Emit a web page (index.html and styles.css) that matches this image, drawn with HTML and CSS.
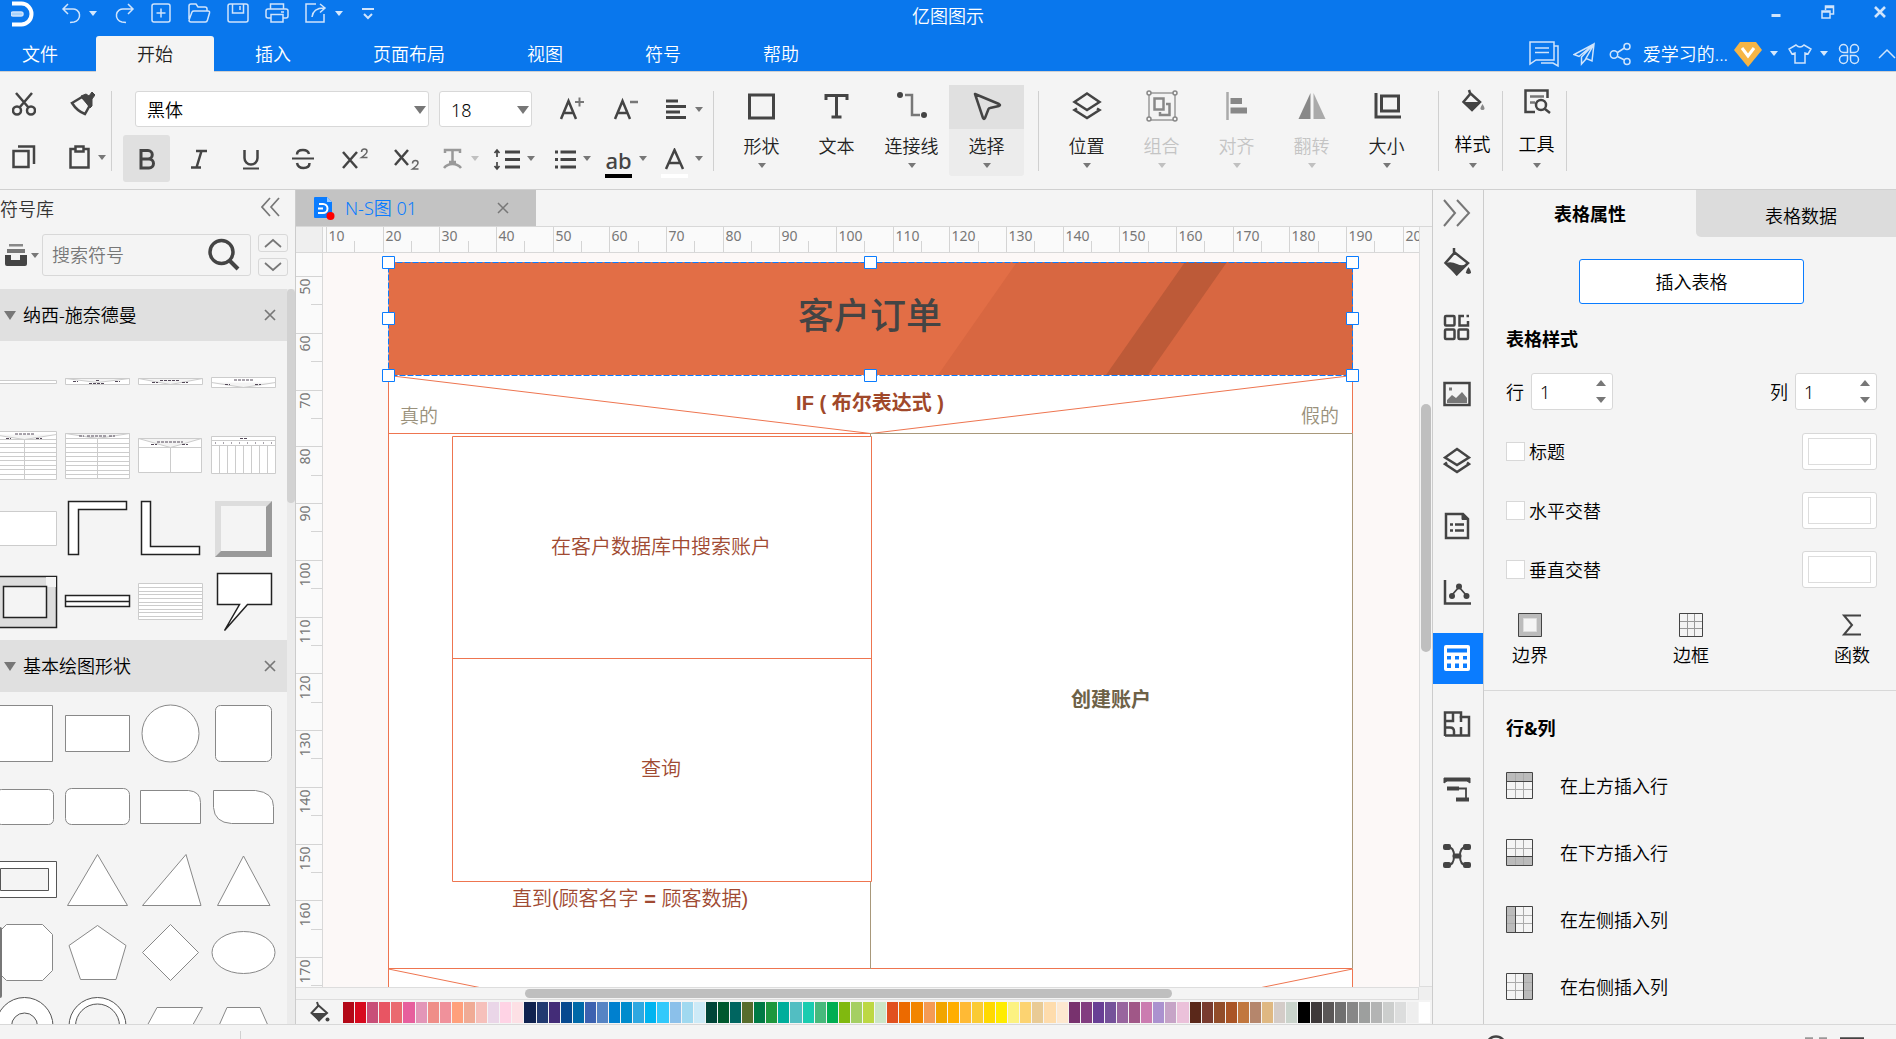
FILE: index.html
```html
<!DOCTYPE html>
<html lang="zh-CN">
<head>
<meta charset="utf-8">
<title>亿图图示</title>
<link rel="stylesheet" href="styles.css">
</head>
<body>
<div class="app">

<header class="top">
  <div class="titlebar">
    <div class="quick">
      <svg class="logo" width="24" height="26" viewBox="0 0 24 26"><path d="M1 2.500H10.500A10 10.500 0 0 1 10.500 23.500H1" fill="none" stroke="#fff" stroke-width="4"/><rect x="0" y="11" width="12" height="4" rx="2" fill="#a6d2fc"/></svg>
      <button class="q undo" aria-label="撤销"><svg width="20" height="22" viewBox="0 0 20 22"><path d="M7 2 2 7l5 5M2 7h9a6 6 0 0 1 2 13l-4 .5"/></svg><i class="caret light"></i></button>
      <button class="q" aria-label="重做"><svg width="20" height="22" viewBox="0 0 20 22"><path d="m13 2 5 5-5 5M18 7H9a6 6 0 0 0-2 13l4 .5"/></svg></button>
      <button class="q" aria-label="新建"><svg width="20" height="22" viewBox="0 0 20 22"><rect x="1" y="2" width="18" height="18" rx="2"/><path d="M10 6.500v9M5.500 11h9"/></svg></button>
      <button class="q" aria-label="打开"><svg width="24" height="22" viewBox="0 0 24 22"><path d="M2 17V4q0-2 2-2h5l2 3h7q2 0 2 2v2M2 18l3-8q.5-1 2-1h14q2 0 1.500 2l-2 7q-.5 2-2 2H4q-2 0-2-2"/></svg></button>
      <button class="q" aria-label="保存"><svg width="22" height="22" viewBox="0 0 22 22"><rect x="1" y="2" width="20" height="18" rx="2"/><path d="M5.500 2v9h11V2M13 4v4"/></svg></button>
      <button class="q" aria-label="打印"><svg width="24" height="22" viewBox="0 0 24 22"><path d="M5.500 7V2h13v5M6 16H3q-2 0-2-2V9q0-2 2-2h18q2 0 2 2v5q0 2-2 2h-3M6 12.500h12V20H6zM16 10h3"/></svg></button>
      <button class="q" aria-label="导出"><svg width="22" height="22" viewBox="0 0 22 22"><path d="M11 2H1v18h18v-8M7 15q1-9 12-9M15 2l5 4-5 4.500"/></svg><i class="caret light"></i></button>
      <button class="q" aria-label="自定义"><svg width="14" height="22" viewBox="0 0 14 22"><path d="M1 7h12M3 12l4 4 4-4" stroke-width="2"/></svg></button>
    </div>
    <h1>亿图图示</h1>
    <div class="winctl">
      <button aria-label="最小化"><svg width="14" height="14" viewBox="0 0 14 14"><path d="M2.500 10.500h9" stroke-width="3"/></svg></button>
      <button aria-label="还原"><svg width="14" height="14" viewBox="0 0 14 14"><path d="M1 6h8v7H1zM1 7h8M4.500 5V1h8v8h-3M5 2.500h8" stroke-width="1.500"/></svg></button>
      <button aria-label="关闭"><svg width="14" height="14" viewBox="0 0 14 14"><path d="m2 2 10 10M12 2 2 12" stroke-width="2.600"/></svg></button>
    </div>
  </div>
  <nav class="menu">
    <button class="first">文件</button>
    <button class="on">开始</button>
    <button>插入</button>
    <button>页面布局</button>
    <button>视图</button>
    <button>符号</button>
    <button>帮助</button>
    <div class="account">
      <svg width="30" height="28" viewBox="0 0 30 28" stroke-width="2"><path d="M1 24V2h24v18H7zM25 6h4v20l-5-3H12M6 8h14M6 12.500h14"/></svg>
      <svg width="22" height="24" viewBox="0 0 22 24"><path d="M21 2 1 12.500l5 2L21 2l-2 17-6-2.500L21 2 8.500 15v7l4.500-5"/></svg>
      <svg width="22" height="24" viewBox="0 0 22 24"><circle cx="5" cy="12.500" r="3.700"/><circle cx="18" cy="4.500" r="3"/><circle cx="18" cy="19.500" r="3"/><path d="m8.500 10.500 7-4.500M8.500 14.500l7 3.500"/></svg>
      <span>爱学习的...</span>
      <svg width="28" height="26" viewBox="0 0 28 26" class="vip"><path d="M6 1h16l6 8-14 17L0 9z" fill="#f6b545" stroke="none"/><path d="m8 7 6 8 6-8" stroke="#fff" stroke-width="3"/></svg>
      <i class="caret light"></i>
      <svg width="24" height="24" viewBox="0 0 24 24" class="shirt"><path d="M8 3 1 7l3 5 3-1v10h10V11l3 1 3-5-7-4q-4 4-8 0z"/></svg>
      <i class="caret light"></i>
      <svg width="22" height="24" viewBox="0 0 22 24" class="clover"><path d="M9.500 10.500H5.500a4 4 0 1 1 4-4zM12.500 10.500h4a4 4 0 1 0-4-4zM9.500 13.500H5.500a4 4 0 1 0 4 4zM12.500 13.500h4a4 4 0 1 1-4 4z"/></svg>
      <svg width="18" height="24" viewBox="0 0 18 24" class="fold"><path d="m1 16 8-8 8 8"/></svg>
    </div>
  </nav>
</header>

<section class="ribbon">
  <div class="clip">
    <button aria-label="剪切"><svg width="24" height="24" viewBox="0 0 24 24"><circle cx="5" cy="18.500" r="4"/><circle cx="19" cy="18.500" r="4"/><path d="M4 1l12.500 14.500M20 1 7.500 15.500"/></svg></button>
    <button aria-label="格式刷"><svg width="26" height="24" viewBox="0 0 26 24"><path d="m3 11 10-6 8 8-5 9q-8-3-13-11z"/><path d="m12 4 5-2 3 2 3-4 3 3-3 4 0 7-2 2z" fill="#444" stroke-width="1"/></svg></button>
    <button aria-label="复制"><svg width="24" height="24" viewBox="0 0 24 24"><path d="M1.500 6h15v16h-15zM6 1.500h16V19"/></svg></button>
    <button class="paste" aria-label="粘贴"><svg width="24" height="24" viewBox="0 0 24 24"><path d="M7 4H2.500v18.500h18V4H16M7.500 1.500h8v5h-8z"/></svg><i class="caret"></i></button>
  </div>
  <i class="rule"></i>
  <div class="font">
    <div class="frow one">
      <label class="pick wide"><select aria-label="字体"><option>黑体</option></select><i class="caret big"></i></label>
      <label class="pick num"><select aria-label="字号"><option>18</option></select><i class="caret big"></i></label>
      <button class="grow" aria-label="增大字号"><svg width="28" height="28" viewBox="0 0 28 28"><path d="m3 24 7.500-18L18 24M5.500 18h10"/><path d="M17 7h9M21.500 2.500v9" stroke="#777" stroke-width="2"/></svg></button>
      <button class="grow" aria-label="减小字号"><svg width="28" height="28" viewBox="0 0 28 28"><path d="m3 24 7.500-18L18 24M5.500 18h10"/><path d="M18 7h8" stroke="#777"/></svg></button>
      <button class="split" aria-label="对齐方式"><svg width="28" height="28" viewBox="0 0 28 28"><path d="M5 6h12M5 11.500h20M5 17h14M5 22.500h20" stroke-width="2.800"/></svg><i class="caret"></i></button>
    </div>
    <div class="frow two">
      <button class="fb on" aria-label="加粗"><svg width="28" height="28" viewBox="0 0 28 28"><path d="M8 5.500h7a4 4 0 0 1 0 8.500H8h8a4.500 4.500 0 0 1 0 9H8z" stroke-width="3"/></svg></button>
      <button class="fb" aria-label="倾斜"><svg width="28" height="28" viewBox="0 0 28 28"><path d="M11 6h11M6 22.500h10M16.500 6l-5 16.500"/></svg></button>
      <button class="fb" aria-label="下划线"><svg width="28" height="28" viewBox="0 0 28 28"><path d="M7.500 5v8a6 6 0 0 0 13 0V5"/><path d="M6 23.500h16" stroke-width="2"/></svg></button>
      <button class="fb" aria-label="删除线"><svg width="28" height="28" viewBox="0 0 28 28"><path d="M20 9q-1-4-6-4-6 0-6 4.500M8 18q1 5 6.500 5 6 0 6-5"/><path d="M3 13.500h22" stroke-width="2"/></svg></button>
      <button class="fb" aria-label="上标"><svg width="28" height="28" viewBox="0 0 28 28"><path d="m2 7 14 16M16 7 2 23"/><path d="M20.500 7q0-3 3-3 2.500 0 2.500 2.500 0 2-5.500 6h6" stroke="#666" stroke-width="1.500"/></svg></button>
      <button class="fb" aria-label="下标"><svg width="28" height="28" viewBox="0 0 28 28"><path d="m2 5 13 15M15 5 2 20"/><path d="M19.500 18.500q0-3 3-3 2.500 0 2.500 2.500 0 2-5.500 6h6" stroke="#666" stroke-width="1.500"/></svg></button>
      <button class="split off lead" aria-label="文本效果"><svg width="28" height="28" viewBox="0 0 28 28"><path d="M8 8V5h15v3M15.500 5v12M12 17h7M7 23q3-4 8.500-4t8.500 4" stroke="#999"/></svg><i class="caret pale"></i></button>
      <button class="split" aria-label="行距"><svg width="28" height="28" viewBox="0 0 28 28"><path d="M12 7h15M12 14.500h15M12 22h15" stroke-width="3"/><path d="M4 5v7M1.500 8 4 5l2.500 3M4 17v7M1.500 21 4 24l2.500-3" stroke-width="1.700"/></svg><i class="caret"></i></button>
      <button class="split" aria-label="项目符号"><svg width="28" height="28" viewBox="0 0 28 28"><path d="M11.500 7H27M11.500 14.500H27M11.500 22H27M6 7h3M6 14.500h3M6 22h3" stroke-width="2.800"/></svg><i class="caret"></i></button>
      <button class="split" aria-label="文本突出"><span class="glyph ink">ab</span><i class="caret"></i></button>
      <button class="split" aria-label="字体颜色"><span class="glyph blank"><svg width="28" height="26" viewBox="0 0 28 26"><path d="m5 21 8.500-19L22 21M7.500 15h12"/></svg></span><i class="caret"></i></button>
    </div>
  </div>
  <i class="rule"></i>
  <div class="tools draw">
    <button class="tool"><span><svg width="30" height="30" viewBox="0 0 30 30"><rect x="2.500" y="4" width="24" height="23" stroke-width="3"/></svg></span><b>形状</b><i class="caret"></i></button>
    <button class="tool"><span><svg width="30" height="30" viewBox="0 0 30 30"><path d="M4 9V4.500h21V9M14.500 4.500V26M9.500 26h10" stroke-width="3"/></svg></span><b>文本</b></button>
    <button class="tool"><span><svg width="30" height="30" viewBox="0 0 30 30"><path d="M8 4h7v20h8" stroke="#777" stroke-width="2.500"/><circle cx="3" cy="4" r="3" fill="#444" stroke="none"/><circle cx="27" cy="24" r="3" fill="#444" stroke="none"/></svg></span><b>连接线</b><i class="caret"></i></button>
    <button class="tool on"><span><svg width="30" height="30" viewBox="0 0 30 30"><path d="M3 3 27 13q2 1 0 2l-9 2q-1 0-1.500 1L13 27q-1 2-2 0z" stroke-linejoin="round"/></svg></span><b>选择</b><i class="caret"></i></button>
  </div>
  <i class="rule far"></i>
  <div class="tools place">
    <button class="tool"><span><svg width="30" height="30" viewBox="0 0 30 30"><path d="M15 2.500 27.500 11 15 19 2.500 11zM5 17.500l-2.500 1.500L15 27l12.500-8-2.500-1.500"/></svg></span><b>位置</b><i class="caret"></i></button>
    <button class="tool off"><span><svg width="32" height="32" viewBox="0 0 32 32"><path d="M3 3h26v27H3z" stroke="#999" stroke-width="1.500"/><g fill="#f4f4f4" stroke="#888" stroke-width="1.500"><circle cx="3" cy="3" r="2"/><circle cx="29" cy="3" r="2"/><circle cx="3" cy="29" r="2"/><circle cx="29" cy="29" r="2"/></g><path d="M8.500 8.500h9v11h-9zM20 14h3.500v11H14v-3" stroke="#888"/></svg></span><b>组合</b><i class="caret pale"></i></button>
    <button class="tool off"><span><svg width="30" height="30" viewBox="0 0 30 30"><path d="M5.500 1v28" stroke="#aaa" stroke-width="2.500"/><path d="M8.500 7H20v6H8.500zM8.500 16.500H25v6H8.500z" fill="#888" stroke="none"/></svg></span><b>对齐</b><i class="caret pale"></i></button>
    <button class="tool off"><span><svg width="30" height="30" viewBox="0 0 30 30"><path d="M13.500 2v26h-12z" fill="#888" stroke="none"/><path d="M16.500 2v26h12z" fill="#aaa" stroke="none"/></svg></span><b>翻转</b><i class="caret pale"></i></button>
    <button class="tool"><span><svg width="30" height="30" viewBox="0 0 30 30"><path d="M4 2v24h25" stroke-width="3"/><path d="M9.500 5h17v15h-17z" stroke-width="3"/></svg></span><b>大小</b><i class="caret"></i></button>
  </div>
  <i class="rule far"></i>
  <div class="tools slim">
    <button class="tool compact"><span><svg width="24" height="26" viewBox="0 0 24 26"><path d="M10 5 2.500 14 11 22l8-8-10-9-1-3" stroke-width="2.500"/><path d="M3 14h16l-8 9z" fill="#444" stroke="none"/><path d="M21.500 16q4 6 0 6t0-6z" fill="#888" stroke="none"/></svg></span><b>样式</b><i class="caret"></i></button>
  </div>
  <i class="rule"></i>
  <div class="tools slim">
    <button class="tool compact"><span><svg width="28" height="26" viewBox="0 0 28 26"><path d="M12 24H2.500V2.500h22V10"/><path d="M7 8.500h14M7 14.500h5" stroke="#777"/><circle cx="18" cy="17" r="5"/><path d="m22 21 5 4"/></svg></span><b>工具</b><i class="caret"></i></button>
  </div>
  <i class="rule"></i>
</section>

<main class="body">
  <aside class="library">
    <div class="libhead"><h2>符号库</h2><button aria-label="收起"><svg width="20" height="20" viewBox="0 0 20 20"><path d="M9 1 1 10l8 9M18 1l-8 9 8 9" stroke="#777" stroke-width="1.700"/></svg></button></div>
    <div class="find">
      <button class="stack" aria-label="符号库列表"><svg width="24" height="24" viewBox="0 0 24 24"><path d="M5 1h14v2.500H5z" fill="#888" stroke="none"/><path d="M3 6h18v4H3z" fill="#777" stroke="none"/><path d="M1 12h6v5h9v-5h7v9q0 2-2 2H3q-2 0-2-2z" fill="#444" stroke="none"/></svg><i class="caret"></i></button>
      <label class="search"><input type="text" placeholder="搜索符号" aria-label="搜索符号"><svg width="34" height="34" viewBox="0 0 34 34"><circle cx="14.500" cy="14" r="11.500" stroke-width="3.500"/><path d="m23 23 8 8" stroke-width="4"/></svg></label>
      <div class="updown">
        <button aria-label="上一个"><svg width="18" height="10" viewBox="0 0 18 10"><path d="m1 9 8-7 8 7" stroke="#777" stroke-width="1.700"/></svg></button>
        <button aria-label="下一个"><svg width="18" height="10" viewBox="0 0 18 10"><path d="m1 1 8 7 8-7" stroke="#777" stroke-width="1.700"/></svg></button>
      </div>
    </div>
    <div class="liblist">
      <div class="libscroll">
        <div class="sect"><i class="caret huge"></i><h3>纳西-施奈德曼</h3><button aria-label="关闭纳西-施奈德曼"><svg width="12" height="12" viewBox="0 0 12 12"><path d="m1 1 10 10M11 1 1 11" stroke="#777" stroke-width="1.700"/></svg></button></div>
        <div class="shapes faint">
          <svg viewBox="0 0 73 73"><path d="M4.500 35.500h64v3h-64z"/></svg>
          <svg viewBox="0 0 73 73"><path d="M4.500 33.500h64v6h-64zl32 4 32-4"/><path d="M12 36.500h5M54 36.500h5M28 38.500h16M35 35.500h3" class="tx"/></svg>
          <svg viewBox="0 0 73 73"><path d="M4.500 33.500h64v6h-64zl32 6 32-6"/><path d="M18 37.500h6M48 37.500h6M26 35.500h19" class="tx"/></svg>
          <svg viewBox="0 0 73 73"><path d="M4.500 32.500h64v10h-64zm0 5 32 5 32-5"/><path d="M18 39.500h5M48 39.500h6M27 35h19" class="tx"/></svg>
          <svg viewBox="0 0 73 73"><path d="M4.500 13.500h64v48h-64zm0 3 32 5 32-5M4.500 21.500h64m-64 4h64m-64 4h64m-64 5h64m-64 4h64m-64 4h64m-64 5h64m-64 4h64m-64 5h64M36.500 21.500v40"/><path d="M18 20.500h5M48 20.500h6M27 16h19" class="tx"/></svg>
          <svg viewBox="0 0 73 73"><path d="M4.500 15.500h64v45h-64zl32 5 32-5M4.500 20.500h64m-64 5h64m-64 4h64m-64 5h64m-64 4h64m-64 5h64m-64 4h64m-64 5h64m-64 4h64M36.500 20.500v40"/><path d="M18 18h5M48 18h6M26 18h20" class="tx"/></svg>
          <svg viewBox="0 0 73 73"><path d="M4.500 20.500h63v34h-63zl32 9 31-9M4.500 29.500h63M36.500 29.500v25"/><path d="M17 26.500h6M48 26.500h6M23 24h26" class="tx"/></svg>
          <svg viewBox="0 0 73 73"><path d="M4.500 18.500h64v37h-64zm0 4h64m-64 5h64M12.500 27.500v28m8-28v28m8-28v28m8-28v28m8-28v28m8-28v28m8-28v28"/><path d="M33 20.500h7M8 25h1m7 0h1m7 0h1m7 0h1m7 0h1m7 0h1m7 0h1m7 0h1" class="tx"/></svg>
          <svg viewBox="0 0 73 73"><path d="M4.500 20.500h64v34h-64z"/></svg>
          <svg viewBox="0 0 73 73" class="bold"><path d="M7.500 63.500v-53h58v8h-48v45z"/></svg>
          <svg viewBox="0 0 73 73" class="bold"><path d="M7.500 10.500h9v45h49v8h-58z"/></svg>
          <svg viewBox="0 0 73 73" class="bevel"><path d="M8 10h57v56H8z" fill="#ddd"/><path d="M65 10v56H8l6-6h45V16z" fill="#999"/><path d="M14 15h45v45H14z" fill="#f4f4f4"/></svg>
          <svg viewBox="0 0 73 73" class="bold"><path d="M4.500 12.500h64v51h-64z" class="g"/><path d="M58 13h10v10H58z" fill="#f4f4f4" stroke="none"/><path d="M15.500 22.500h43v31h-43z" class="h"/></svg>
          <svg viewBox="0 0 73 73" class="bold"><path d="M4.500 31.500h64v11h-64zm0 6h64"/></svg>
          <svg viewBox="0 0 73 73"><path d="M4.500 19.500h64v36h-64zm0 4h64m-64 4h64m-64 3h64m-64 4h64m-64 4h64m-64 3h64m-64 4h64m-64 3h64m-64 4h64"/></svg>
          <svg viewBox="0 0 73 73" class="bold"><path d="M10.500 9.500h54v31h-24l-23 26 15-26h-22z"/></svg>
        </div>
        <div class="sect"><i class="caret huge"></i><h3>基本绘图形状</h3><button aria-label="关闭基本绘图形状"><svg width="12" height="12" viewBox="0 0 12 12"><path d="m1 1 10 10M11 1 1 11" stroke="#777" stroke-width="1.700"/></svg></button></div>
        <div class="shapes">
          <svg viewBox="0 0 73 73"><path d="M8.500 9.500h56v56h-56z"/></svg>
          <svg viewBox="0 0 73 73"><path d="M4.500 19.500h64v36h-64z"/></svg>
          <svg viewBox="0 0 73 73"><circle cx="36.500" cy="37.500" r="28.500"/></svg>
          <svg viewBox="0 0 73 73"><rect x="8.500" y="9.500" width="56" height="56" rx="5"/></svg>
          <svg viewBox="0 0 73 73"><rect x="8.500" y="20.500" width="57" height="35" rx="5"/></svg>
          <svg viewBox="0 0 73 73"><rect x="4.500" y="19.500" width="64" height="36" rx="6"/></svg>
          <svg viewBox="0 0 73 73"><path d="M6.500 21.500h48q12 1 12 12v21h-60z"/></svg>
          <svg viewBox="0 0 73 73"><path d="M6.500 21.500h42q18 2 18 16v17h-42q-17-1-18-16z"/></svg>
          <svg viewBox="0 0 73 73" class="dark"><path d="M4.500 19.500h64v36h-64z"/><path d="M12.500 26.500h48v22h-48z" class="h"/></svg>
          <svg viewBox="0 0 73 73"><path d="m36.500 12.500 30 51h-60z"/></svg>
          <svg viewBox="0 0 73 73"><path d="m52 12.500 15 51H8.500z"/></svg>
          <svg viewBox="0 0 73 73"><path d="m36.500 14 26.500 49.500H10.500z"/></svg>
          <svg viewBox="0 0 73 73"><path d="M18.500 9.500h36l10 10v36l-10 10h-36l-10-10v-36z"/></svg>
          <svg viewBox="0 0 73 73"><path d="M36.500 10.500 65 30.500l-10 34H19.500L8 30.500z"/></svg>
          <svg viewBox="0 0 73 73"><path d="m36.500 9.500 28 28-28 28-28-28z"/></svg>
          <svg viewBox="0 0 73 73"><ellipse cx="36.500" cy="37.500" rx="31.500" ry="21"/></svg>
          <svg viewBox="0 0 73 73" class="dark"><circle cx="36.500" cy="38" r="28.500"/><circle cx="36.500" cy="38" r="13" class="h"/></svg>
          <svg viewBox="0 0 73 73" class="dark"><circle cx="36.500" cy="38" r="28.500"/><circle cx="36.500" cy="38" r="22" class="h"/></svg>
          <svg viewBox="0 0 73 73"><path d="M23 19.500h45.500l-20 36h-45z"/></svg>
          <svg viewBox="0 0 73 73"><path d="M20 19.500h33l16 36H4z"/></svg>
        </div>
        <i class="grip"></i>
      </div>
      <div class="vtrack"><i></i></div>
    </div>
  </aside>

  <section class="doc">
    <div class="doctabs">
      <div class="doctab"><svg width="22" height="24" viewBox="0 0 22 24"><path d="M2 1h12l5 5v15q0 1-1 1H2q-1 0-1-1V2q0-1 1-1z" fill="#0a7cff" stroke="none"/><path d="M14 1l5 5h-5z" fill="#9ccbff" stroke="none"/><path d="M6 8h4a4.200 4.200 0 0 1 0 9H5M5 12.500h5" stroke="#fff" stroke-width="2"/><circle cx="17.500" cy="20" r="4" fill="#f00" stroke="none"/></svg><span>N-S图 01</span><button aria-label="关闭文档"><svg width="12" height="12" viewBox="0 0 12 12"><path d="m1 1 10 10M11 1 1 11" stroke="#777" stroke-width="1.500"/></svg></button></div>
    </div>
    <div class="work">
      <div class="corner"></div>
      <svg class="hruler" id="hruler"></svg>
      <svg class="vruler" id="vruler"></svg>
      <div class="canvas">
        <svg class="chart" width="970" height="740" viewBox="0 0 970 740">
          <path d="M1 8h964v732H1z" fill="#fff" stroke="none"/>
          <path d="M.5 9h964v113H.5z" fill="#e26e46"/>
          <path d="M629 9h336v113H550z" fill="#d86741"/>
          <path d="M797 9h42l-79 113h-42z" fill="#bd5a38"/>
          <g fill="none" stroke="#ee7550">
            <path d="M.5 122v618M.5 180.500h482M.5 715.500h964M964.500 122v58.500M964.500 716v24M.5 122.500l482 58 482-58M.5 716l482 98 482-98"/>
            <path d="M64.500 183.500h419v445h-419zm0 222h419"/>
          </g>
          <path d="M482.500 180.500h482v535M482.500 181v3M482.500 629v87" fill="none" stroke="#a8987a"/>
          <path d="M.5 9.500h964v113H.5z" fill="none" stroke="#0a7cff" stroke-dasharray="6 2"/>
          <g fill="#fff" stroke="#0a7cff">
            <path d="M-5.500 3.500h12v12h-12zm482 0h12v12h-12zm482 0h12v12h-12zM-5.500 59.500h12v12h-12zm964 0h12v12h-12zM-5.500 116.500h12v12h-12zm482 0h12v12h-12zm482 0h12v12h-12z"/>
          </g>
          <g text-anchor="middle" class="txt">
            <text x="482" y="76" class="t-head">客户订单</text>
            <text x="482" y="157" class="t-if">IF ( 布尔表达式 )</text>
            <text x="31" y="170" class="t-side">真的</text>
            <text x="932" y="170" class="t-side">假的</text>
            <text x="273" y="301" class="t-body">在客户数据库中搜索账户</text>
            <text x="273" y="523" class="t-body">查询</text>
            <text x="242" y="653" class="t-body">直到(顾客名字 <tspan class="eq">=</tspan> 顾客数据)</text>
            <text x="723" y="454" class="t-new">创建账户</text>
          </g>
        </svg>
      </div>
      <div class="vbar"><i></i></div>
      <div class="hbar"><i></i></div>
      <div class="notch"></div>
    </div>
    <div class="palette">
      <svg width="22" height="24" viewBox="0 0 22 24"><path d="M10 5 2.500 13l7.500 7 8-7-9-8-1-3" stroke-width="2"/><path d="M3 13h15l-8 9z" fill="#444" stroke="none"/><circle cx="18.500" cy="19.500" r="2" fill="#444" stroke="none"/></svg>
      <div class="colors" id="colors"></div>
    </div>
  </section>

  <nav class="strip">
    <button class="more" aria-label="展开"><svg width="28" height="28" viewBox="0 0 28 28"><path d="m1 1 11 13L1 27M14 1l12 13L14 27" stroke="#777" stroke-width="2"/></svg></button>
    <button aria-label="填充"><svg width="28" height="30" viewBox="0 0 28 30"><path d="M12 5 2.500 16 14 27l11-11L11 5V1" stroke-width="2.500"/><path d="M3 16q5-2 11 1t11-1L13.500 29z" fill="#444" stroke="none"/><path d="M25.500 20q5 7 0 7t0-7z" fill="#444" stroke="none"/></svg></button>
    <button aria-label="主题"><svg width="28" height="28" viewBox="0 0 28 28"><rect x="2" y="2" width="9.500" height="9.500" rx="1"/><rect x="2" y="15.500" width="9.500" height="9.500" rx="1"/><rect x="15.500" y="15.500" width="9.500" height="9.500" rx="1"/><path d="M21 2h-4.500v9.500H25V7M23.500 2h2.500"/></svg></button>
    <button aria-label="图片"><svg width="28" height="28" viewBox="0 0 28 28"><path d="M1.500 3h25v22h-25z"/><path d="M4 23v-3l5-5 4 3 6-6 5 6v5z" fill="#777" stroke="none"/><path d="M6 7.500h3v3H6z" fill="#777" stroke="none"/></svg></button>
    <button aria-label="图层"><svg width="28" height="28" viewBox="0 0 28 28"><path d="M14 3 26 11.500 14 19 2 11.500zM4 16.500 2 18l12 8 12-8-2-1.500"/></svg></button>
    <button aria-label="大纲"><svg width="28" height="28" viewBox="0 0 28 28"><path d="M3 2h17l5 5v19H3z"/><path d="M19 1.500v6h6z" fill="#444" stroke-width="1"/><path d="M7 12.500h3M12 12.500h9M7 18.500h3M12 18.500h9"/></svg></button>
    <button aria-label="图表"><svg width="28" height="28" viewBox="0 0 28 28"><path d="M2 2v23.500h26"/><path d="m9 17 7-8 7 8" stroke-width="1.800"/><g fill="#444" stroke="none"><circle cx="9" cy="18" r="3"/><circle cx="16" cy="8.500" r="3"/><circle cx="23.500" cy="18" r="3"/></g></svg></button>
    <button class="on" aria-label="表格"><svg width="28" height="28" viewBox="0 0 28 28"><rect x="1" y="1" width="26" height="26" rx="2" fill="#fff" stroke="none"/><path d="M4 4.500h20v4H4zM4 12h4v3.500H4zm8 0h4v3.500h-4zm8 0h4v3.500h-4zM4 19.500h4V24H4zm8 0h4V24h-4zm8 0h4V24h-4z" fill="#0a7cff" stroke="none"/></svg></button>
    <button aria-label="平面图"><svg width="28" height="28" viewBox="0 0 28 28"><path d="M2 26V2.500h16V7h8v18.500H2z"/><path d="M3 11h7V3M2 17.500h5q4 0 4 4V25M18 6v6M18 17v8" stroke-width="2.500"/></svg></button>
    <button aria-label="甘特图"><svg width="28" height="28" viewBox="0 0 28 28"><path d="M1 2h26v5l-3-2H4L1 7z" fill="#444" stroke-width="1"/><path d="M4 12.500h12M13 23.500h13" stroke-width="4"/><path d="M16 12.500h7V23" stroke-width="1.800"/></svg></button>
    <button aria-label="思维导图"><svg width="28" height="28" viewBox="0 0 28 28"><path d="M5 5q6 0 6 9t-6 9M23 5q-6 0-6 9t6 9" stroke-width="2"/><g fill="#444" stroke="none"><rect x="0" y="2" width="8" height="6" rx="2"/><rect x="20" y="2" width="8" height="6" rx="2"/><rect x="0" y="20" width="8" height="6" rx="2"/><rect x="20" y="20" width="8" height="6" rx="2"/><rect x="9.500" y="11.500" width="9" height="5" rx="2"/></g></svg></button>
  </nav>

  <aside class="props">
    <div class="ptabs"><button class="on">表格属性</button><button>表格数据</button></div>
    <section class="style">
      <button class="insert">插入表格</button>
      <h3>表格样式</h3>
      <div class="dims">
        <label>行<span class="spin"><input type="number" value="1"><i></i></span></label>
        <label>列<span class="spin"><input type="number" value="1"><i></i></span></label>
      </div>
      <div class="opt"><label><input type="checkbox">标题</label><button class="well" aria-label="标题颜色"></button></div>
      <div class="opt"><label><input type="checkbox">水平交替</label><button class="well" aria-label="水平交替颜色"></button></div>
      <div class="opt"><label><input type="checkbox">垂直交替</label><button class="well" aria-label="垂直交替颜色"></button></div>
      <div class="acts">
        <button><svg width="24" height="24" viewBox="0 0 24 24"><path d="M.5.500h23v23H.5z" fill="#bbb" stroke-width="1"/><path d="M5.500 5.500h13v13h-13z" fill="#f4f4f4" stroke="#ddd" stroke-width="1"/></svg>边界</button>
        <button><svg width="24" height="24" viewBox="0 0 24 24"><path d="M8.500 1v22M15.500 1v22M1 8.500h22M1 15.500h22" stroke="#999" stroke-width="1"/><path d="M.5.500h23v23H.5z" stroke-width="1"/></svg>边框</button>
        <button><svg width="24" height="24" viewBox="0 0 24 24"><path d="M21 2.500H4l8 9.500-8 9.500h17" stroke-width="2"/></svg>函数</button>
      </div>
    </section>
    <section class="rowcol">
      <h3>行&amp;列</h3>
      <button><svg width="27" height="27" viewBox="0 0 27 27"><path d="M1 1h25v9H1z" fill="#bbb" stroke="none"/><path d="M9.500 1v25M17.500 1v25M1 17.500h25" stroke="#aaa" stroke-width="1"/><path d="M.5.500h26v26H.5zM1 9.500h25" stroke-width="1"/></svg>在上方插入行</button>
      <button><svg width="27" height="27" viewBox="0 0 27 27"><path d="M1 17h25v9H1z" fill="#bbb" stroke="none"/><path d="M9.500 1v25M17.500 1v25M1 9.500h25" stroke="#aaa" stroke-width="1"/><path d="M.5.500h26v26H.5zM1 17.500h25" stroke-width="1"/></svg>在下方插入行</button>
      <button><svg width="27" height="27" viewBox="0 0 27 27"><path d="M1 1h9v25H1z" fill="#bbb" stroke="none"/><path d="M17.500 1v25M1 9.500h25M1 17.500h25" stroke="#aaa" stroke-width="1"/><path d="M.5.500h26v26H.5zM9.500 1v25" stroke-width="1"/></svg>在左侧插入列</button>
      <button><svg width="27" height="27" viewBox="0 0 27 27"><path d="M17 1h9v25h-9z" fill="#bbb" stroke="none"/><path d="M9.500 1v25M1 9.500h25M1 17.500h25" stroke="#aaa" stroke-width="1"/><path d="M.5.500h26v26H.5zM17.500 1v25" stroke-width="1"/></svg>在右侧插入列</button>
    </section>
  </aside>
</main>

<footer class="status">
  <i class="mark"></i>
  <svg class="s1" width="22" height="22" viewBox="0 0 22 22"><circle cx="11" cy="11" r="9.500"/></svg>
  <svg class="s2" width="22" height="12" viewBox="0 0 22 12"><path d="M0 1.500h8M14 1.500h8" stroke="#999"/></svg>
  <svg class="s3" width="24" height="12" viewBox="0 0 24 12"><path d="M1 9V1.500h22V9"/></svg>
</footer>
</div>
<script src="app.js"></script>
</body>
</html>
```
FILE: styles.css
```css
* { box-sizing: border-box; }
body {
  margin: 0;
  font: 18px/24px "Noto Sans", "Noto Sans CJK SC", sans-serif;
  font-weight: 350;
  color: #000;
  background: #f4f4f4;
}
button, input, select { font: inherit; color: inherit; }
button { border: 0; padding: 0; background: none; display: flex; align-items: center; justify-content: center; }
h1, h2, h3 { margin: 0; font: inherit; }
svg { display: block; flex: none; fill: none; stroke: #444; stroke-width: 2.5; }
i { flex: none; }

.app { display: flex; flex-direction: column; height: 100vh; overflow: hidden; }

.caret { width: 0; height: 0; border: 4px solid transparent; border-top: 5px solid #777; border-bottom: 0; }
.caret.light { border-top-color: #d5e8fd; }
.caret.pale { border-top-color: #c0c0c0; }
.caret.big { border-width: 8px 6px 0; }
.caret.huge { border-width: 9px 6px 0; }

/* title bar and menu */
.top { background: #0977ed; color: #fff; }
.top svg { stroke: #cfe4fc; stroke-width: 1.5; }
.titlebar { display: grid; grid-template-columns: 1fr auto 1fr; height: 36px; }
.titlebar h1 { line-height: 32px; }
.quick { display: flex; align-items: flex-start; gap: 16px; padding: 1px 0 0 11px; }
.quick .logo { margin-right: 10px; }
.q { gap: 8px; height: 24px; }
.q .caret { margin-right: 2px; }
.winctl { display: flex; justify-content: flex-end; gap: 38px; padding: 4px 9px 0 0; height: 20px; }
.menu { display: flex; height: 36px; border-bottom: 1px solid #d0d0d0; }
.menu > button { padding: 0 41px; height: 36px; }
.menu > .first { padding: 0 38px 0 22px; }
.menu > .on { background: #f4f4f4; color: #222; border-radius: 3px 3px 0 0; }
.account { display: flex; align-items: center; margin-left: auto; gap: 14px; height: 35px; }
.account span { margin-left: -2px; }
.account .vip { margin: 0 -6px 0 -8px; }
.account svg.shirt { margin: 0 -6px 0 -4px; }
.account svg.clover { margin-left: -4px; }
.account svg.fold { margin-left: 4px; }

/* ribbon */
.ribbon { display: flex; align-items: flex-start; height: 118px; flex: none; padding-top: 13px; border-bottom: 1px solid #d0d0d0; }
.rule { width: 1px; height: 80px; margin-top: 6px; background: #d0d0d0; }
.clip { display: grid; grid-template: 44px 24px / 24px 39px; gap: 9px 33px; padding: 7px 3px 0 12px; align-items: start; }
.clip button { justify-content: flex-start; }
.paste { gap: 6px; }
.paste svg { margin-left: -1px; }
.font { display: flex; flex-direction: column; gap: 8px; padding: 6px 3px 0 11px; }
.frow { display: flex; align-items: center; }
.one { height: 36px; padding-left: 12px; }
.two { height: 47px; gap: 5px; }
.pick { position: relative; height: 36px; margin-right: 10px; }
.pick select { display: block; appearance: none; width: 100%; height: 36px; padding: 2px 11px 0; border: 1px solid #d8d8d8; border-radius: 3px; background: #fff; }
.pick .caret { position: absolute; right: 3px; top: 15px; }
.wide { width: 294px; }
.num { width: 93px; margin-right: 26px; }
.grow { margin-right: 26px; }
.grow + .grow { margin-right: 19px; }
.fb { width: 47px; height: 47px; }
.fb.on { background: #e0e0e0; border-radius: 3px; }
.split { width: 51px; padding-left: 2px; justify-content: flex-start; gap: 6px; }
.glyph { display: flex; flex-direction: column; align-items: center; justify-content: flex-end; width: 27px; height: 30px; font: 500 22px/27px "Noto Sans", sans-serif; color: #444; border-bottom: 4px solid #000; margin: 8px 1px 0 0; }
.blank { border-color: #fff; }
.tools { display: flex; }
.draw { margin-left: 10px; }
.far { margin-left: 14px; }
.place { margin-left: 10px; }
.tool { flex-direction: column; justify-content: flex-start; width: 75px; height: 91px; border-radius: 3px; }
.tool span { display: flex; align-items: center; justify-content: center; width: 100%; height: 44px; padding-bottom: 2px; }
.tool b { font-weight: inherit; color: #222; line-height: 26px; margin: 4px 0; }
.tool.on { background: #ececec; }
.tool.on span { background: #e0e0e0; }
.tool.off b { color: #c4c4c4; }
.slim .tool { width: 63px; padding-left: 4px; }
.compact span { height: 34px; }
.compact b { margin: 12px 0 6px; line-height: 26px; color: #000; }

.body { display: flex; flex: 1; min-height: 0; }

/* symbol library */
.library { width: 296px; flex: none; border-right: 1px solid #ccc; display: flex; flex-direction: column; overflow: hidden; }
.libhead { display: flex; justify-content: space-between; padding: 7px 14px 0 0; height: 44px; align-items: flex-start; color: #333; }
.find { display: flex; height: 55px; align-items: flex-start; }
.stack { width: 42px; height: 42px; gap: 3px; }
.search { display: flex; align-items: center; width: 209px; height: 42px; border: 1px solid #d8d8d8; border-radius: 3px; padding: 0 9px; }
.search input { flex: 1; min-width: 0; border: 0; padding: 0; background: none; outline: 0; }
.search input::placeholder { color: #777; opacity: 1; }
.updown { display: grid; gap: 6px; margin-left: 7px; }
.updown button { width: 30px; height: 18px; border: 1px solid #d8d8d8; border-radius: 3px; }
.liblist { display: flex; flex: 1; min-height: 0; }
.libscroll { position: relative; flex: 1; overflow: hidden; }
.grip { position: absolute; left: 0; top: 638px; width: 2px; height: 71px; background: #777; border-radius: 0 2px 2px 0; }
.sect { display: flex; align-items: center; height: 52px; padding: 0 11px 0 4px; background: #e0e0e0; }
.sect h3 { flex: 1; margin-left: 7px; }
.shapes { display: grid; grid-template-columns: repeat(4, 73px); grid-auto-rows: 73px; margin-left: -12px; padding: 4px 0 3px; }
.shapes svg { width: 73px; height: 73px; fill: #fff; stroke: #888; stroke-width: 1; }
.faint svg { stroke: #ccc; }
.faint .tx { stroke: #534858; stroke-dasharray: 3 1; }
.shapes .bold { stroke: #222; stroke-width: 1.5; }
.shapes .dark { stroke: #555; }
.shapes .bevel { stroke: none; }
.shapes .h { fill: #f4f4f4; }
.shapes .g { fill: #ddd; }
.vtrack { width: 8px; background: #ebebeb; }
.vtrack i { display: block; height: 214px; border-radius: 4px; background: #d2d2d2; }

/* document */
.doc { flex: 1; min-width: 0; display: flex; flex-direction: column; }
.doctabs { height: 37px; flex: none; border-bottom: 1px solid #d8d8d8; }
.doctab { display: flex; align-items: center; width: 240px; height: 36px; padding: 0 27px 0 17px; background: #c3c3c3; color: #0a7cff; }
.doctab span { flex: 1; margin-left: 10px; }
.work { flex: 1; min-height: 0; display: grid; grid-template: 26px 1fr 13px / 27px 1fr 13px; }
.corner { background: #efefef; border: solid #d8d8d8; border-width: 0 1px 1px 0; }
.hruler, .vruler { width: 100%; height: 100%; min-width: 0; background: #fafafa; stroke: #d4d4d4; stroke-width: 1; overflow: hidden; }
.hruler { border-bottom: 1px solid #d8d8d8; }
.vruler { border-right: 1px solid #d8d8d8; }
.hruler text, .vruler text { font: 400 14px "Noto Sans", sans-serif; fill: #777; stroke: none; }
.canvas { position: relative; overflow: hidden; background: #fcf8f7; }
.chart { position: absolute; left: 65px; top: 0; overflow: visible; stroke: none; stroke-width: 1; }
.txt { stroke: none; font-family: "Liberation Sans", "Noto Sans CJK SC", sans-serif; font-size: 20px; }
.t-head { font-size: 36px; font-weight: 500; fill: #444; }
.t-if { font-weight: 700; fill: #a0482a; }
.t-side { fill: #9a917c; font-size: 19px; }
.t-body { fill: #a04a32; }
.eq { font-weight: 700; }
.t-new { fill: #6e6247; font-weight: 700; }
.vbar { grid-row: 1 / 3; grid-column: 3; border: solid #ddd; border-width: 0 0 1px 1px; padding: 177px 1px 0; }
.vbar i { display: block; height: 248px; border-radius: 5px; background: #bfbfbf; }
.hbar { grid-column: 1 / 3; grid-row: 3; border: solid #ddd; border-width: 1px 1px 1px 0; padding: 1px 246px 1px 229px; }
.hbar i { display: block; height: 9px; border-radius: 5px; background: #bfbfbf; }
.notch { background: #efefef; grid-column: 3; grid-row: 3; }
.palette { display: flex; align-items: center; height: 24px; flex: none; padding: 0 1px 0 13px; }
.colors { display: flex; flex: 1; gap: 1px; height: 21px; margin-left: 12px; }
.colors button { flex: 1; }

/* side strip */
.strip { width: 52px; flex: none; display: flex; flex-direction: column; gap: 15px; border: solid #ccc; border-width: 0 1px; }
.strip button { height: 51px; flex: none; padding: 0 2px 2px 0; }
.strip .more { height: 47px; margin-bottom: -15px; }
.strip .on { background: #0a7cff; }

/* table properties */
.props { width: 412px; flex: none; }
.ptabs { display: flex; height: 47px; }
.ptabs button { flex: 1; background: #dcdcdc; border-radius: 0 0 0 5px; padding-left: 10px; padding-top: 5px; }
.ptabs .on { flex: none; width: 212px; background: none; font-weight: 700; padding: 0; }
.props h3 { font-weight: 700; }
.style { padding: 22px 19px 23px 22px; border-bottom: 1px solid #d8d8d8; }
.insert { width: 225px; height: 45px; margin: 0 auto 23px; border: 1px solid #0a7cff; border-radius: 3px; background: #fff; }
.dims { display: flex; justify-content: space-between; margin: 22px 0 23px; }
.dims label { display: flex; align-items: center; gap: 7px; }
.spin { position: relative; display: block; }
.spin input { display: block; appearance: textfield; width: 82px; height: 37px; padding: 0 8px; border: 1px solid #d8d8d8; border-radius: 3px; background: #fff; }
.spin input::-webkit-inner-spin-button { display: none; }
.spin i { position: absolute; right: 7px; top: 7px; height: 23px; width: 0; }
.spin i::before, .spin i::after { content: ""; position: absolute; right: 0; border: 5px solid transparent; }
.spin i::before { top: 0; border-top: 0; border-bottom: 6px solid #777; }
.spin i::after { bottom: 0; border-bottom: 0; border-top: 6px solid #777; }
.opt { display: flex; align-items: center; justify-content: space-between; height: 37px; margin-bottom: 22px; }
.opt label { display: flex; align-items: center; gap: 4px; }
.opt input { appearance: none; width: 19px; height: 19px; margin: 0; border: 1px solid #d8d8d8; background: #fff; }
.well { width: 75px; height: 37px; padding: 5px; border: 1px solid #d8d8d8; border-radius: 3px; background: #fff; }
.well::before { content: ""; flex: 1; height: 25px; border: 1px solid #ddd; }
.acts { display: flex; justify-content: space-between; padding: 3px 7px 0 6px; }
.acts button { flex-direction: column; gap: 6px; }
.rowcol { padding: 25px 22px 0; }
.rowcol button { gap: 27px; height: 27px; margin: 32px 0 40px; }
.rowcol button + button { margin-top: 0; }

.status { display: flex; align-items: flex-start; height: 15px; flex: none; border-top: 1px solid #d8d8d8; overflow: hidden; padding-right: 32px; }
.mark { width: 1px; height: 20px; margin: 6px auto 0 240px; background: #d0d0d0; }
.s1 { margin: 10px 298px 0 0; }
.s2 { margin: 12px 13px 0 0; }
.s3 { margin-top: 12px; }
```
FILE: app.js
```js
const NS = 'http://www.w3.org/2000/svg';
const STEP_X = 170 / 3;
const STEP_Y = 56.75;

function add(svg, name, attrs, text) {
  const el = document.createElementNS(NS, name);
  for (const key in attrs) el.setAttribute(key, attrs[key]);
  if (text !== undefined) el.textContent = text;
  svg.appendChild(el);
}

const h = document.getElementById('hruler');
for (let n = 0; 3 + n * STEP_X < h.clientWidth; n++) {
  const x = Math.round(3 + n * STEP_X) + 0.5;
  const half = Math.round(3 + (n + 0.5) * STEP_X) + 0.5;
  add(h, 'path', { d: `M${x} 0v26M${half} 14v12` });
  add(h, 'text', { x: x + 2, y: 14 }, 10 + n * 10);
}

const v = document.getElementById('vruler');
for (let n = 0; 23 + n * STEP_Y < v.clientHeight; n++) {
  const y = Math.round(23 + n * STEP_Y) + 0.5;
  const half = Math.round(23 + (n + 0.5) * STEP_Y) + 0.5;
  add(v, 'path', { d: `M0 ${y}h27M15 ${half}h12` });
  add(v, 'text', { transform: `translate(14 ${y + 2}) rotate(-90)`, 'text-anchor': 'end' }, 50 + n * 10);
}

const palette = `b30817 d70a1e c84f78 e85563 ea6a70 e75f9d e396b8 ef8e88 f0919b ffa07c f0ab95 f6c0bb ead6e8 ffd3e5 fde0e5
10224f 223a70 432c77 07498f 0069a8 3d62b0 5684c4 0080cf 008ccd 2fa8e1 00b4f0 32c9fb 8bc0ea a0d9f0 cdeaf7
004538 00592e 006560 586d2d 007a45 1e973d 00ae9b 52bec2 1accb0 47b97c 00ae52 80b90f a5cf63 bdd843 cce6c7
e1501f ec6a00 f28500 f49b55 f1a500 ffae00 ffba35 facb33 ffd900 ffec00 fcf281 fcd371 e9cb95 fedcac fde8d0
78326e 823d80 683f95 75529a 98659e a05787 cb7cb0 ab92cf c6a4c7 ebc1da 5a281a 793b2f 924d2a aa5526 c1773e
b5866c dfb882 d4ccc8 cad4cc 000000 3e393a 5a5757 707070 878787 9d9f9e b3b4b4 cccecd dcdddd eeeeee ffffff`.split(/\s+/);
const colors = document.getElementById('colors');
for (const code of palette) {
  const b = document.createElement('button');
  b.style.background = '#' + code;
  b.setAttribute('aria-label', '#' + code);
  colors.appendChild(b);
}
```
